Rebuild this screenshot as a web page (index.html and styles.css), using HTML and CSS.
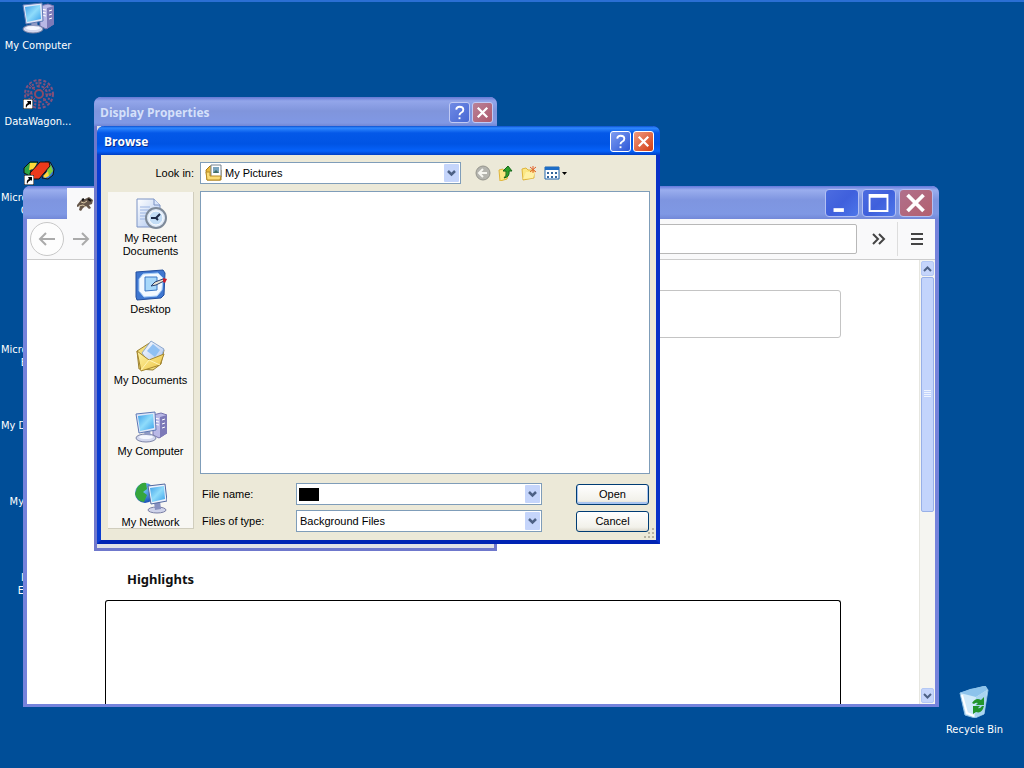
FILE: index.html
```html
<!DOCTYPE html>
<html lang="en">
<head>
    <meta charset="UTF-8">
    <meta name="viewport" content="width=device-width, initial-scale=1.0">
    <title>Desktop</title>
    <link rel="stylesheet" href="styles.css">
</head>
<body>

<!-- Shared icons -->
<svg class="defs" width="0" height="0" aria-hidden="true">
    <defs>
        <linearGradient id="screenBlue" x1="0" y1="0" x2="1" y2="1">
            <stop offset="0" stop-color="#3f9fe8"/>
            <stop offset="0.5" stop-color="#8fdcfb"/>
            <stop offset="1" stop-color="#3aa0ea"/>
        </linearGradient>
        <linearGradient id="paper" x1="0" y1="0" x2="1" y2="1">
            <stop offset="0" stop-color="#ffffff"/>
            <stop offset="1" stop-color="#a9c3ee"/>
        </linearGradient>
        <linearGradient id="folderYellow" x1="0" y1="0" x2="1" y2="1">
            <stop offset="0" stop-color="#fff5a8"/>
            <stop offset="1" stop-color="#edc443"/>
        </linearGradient>
        <radialGradient id="globe" cx="0.4" cy="0.3" r="0.8">
            <stop offset="0" stop-color="#7fd4ff"/>
            <stop offset="1" stop-color="#0b3fae"/>
        </radialGradient>
    </defs>
    <symbol id="computer" viewBox="0 0 32 32">
        <path d="M18 4l8-2 6 2v18l-8 5-6-3z" fill="#b9b8e6" stroke="#7673ad"/>
        <path d="M25 6l7-2v18l-7 5z" fill="#7d7ab8"/>
        <path d="M19 7l5 1M19 10l5 1M19 13l5 1M27 9l3-1M27 13l3-1M27 17l3-1" stroke="#fff"/>
        <ellipse cx="11" cy="27" rx="10" ry="4" fill="#d3d8ee" stroke="#7d85a8"/>
        <path d="M9 20l6-1 1 7-6 1z" fill="#8f9ac4"/>
        <ellipse cx="11" cy="26" rx="7" ry="2" fill="#f5f7ff"/>
        <path d="M1 3l19-2 1 18-17 3z" fill="#dfe7f8" stroke="#5e79b5"/>
        <path d="M3 5l15-2 1 14-14 3z" fill="url(#screenBlue)"/>
    </symbol>
    <symbol id="recent" viewBox="0 0 32 32">
        <path d="M2 1h17l6 6v22H2z" fill="url(#paper)" stroke="#7c93c4"/>
        <path d="M19 1v6h6" fill="#dbe7fb" stroke="#7c93c4"/>
        <path d="M5 9h10M5 12h9M5 15h8M5 18h7M5 21h7" stroke="#9bb4e2"/>
        <circle cx="21" cy="20" r="10" fill="#dce8f7" stroke="#7e8a99" stroke-width="2"/>
        <circle cx="21" cy="20" r="7" fill="#c3ddf6" stroke="#fff"/>
        <path d="M25 16l-4 4h-5M21 20l2 2" fill="none" stroke="#1d2c4a" stroke-width="2"/>
    </symbol>
    <symbol id="desk" viewBox="0 0 32 32">
        <path d="M1 3l27-2 2 3-1 22-3 3-24 2-1-3z" fill="#3f77d0" stroke="#234f9f"/>
        <path d="M8 5l15-1 5 5-1 12-5 6-13 1-5-6 0-12z" fill="#f3f9ff" stroke="#a6cdf7"/>
        <path d="M10 8h12v13l-12 1z" fill="#a8d8fa" stroke="#3b77c4"/>
        <path d="M16 17l4-4 8-3 1 2-8 4z" fill="#e8e2d2" stroke="#27406f"/>
        <path d="M28 9l4 1-2 4-2-1z" fill="#c81e2b"/>
    </symbol>
    <symbol id="documents" viewBox="0 0 32 32">
        <path d="M2 11l14-9 13 8-3 14-8 6-14-1z" fill="#f2dd7a" stroke="#9b8132"/>
        <path d="M7 13l9-12 13 8-3 9-12 5z" fill="url(#paper)" stroke="#8fa9cf"/>
        <path d="M12 11l6-7 7 6-5 7z" fill="#8fc0f3"/>
        <path d="M2 11l12 9 15-6-4 11-19 6z" fill="url(#folderYellow)" stroke="#a5862e"/>
        <path d="M6 30l8-10 11 5" fill="none" stroke="#fff4b5"/>
    </symbol>
    <symbol id="network" viewBox="0 0 32 32">
        <circle cx="10" cy="11" r="10" fill="url(#globe)"/>
        <path d="M2 6q4-6 9-5l1 6-4 3 4 3-3 7q-7-1-9-8z" fill="#36a63c"/>
        <ellipse cx="22" cy="28" rx="9" ry="3" fill="#cfd3ea" stroke="#7a7fa5"/>
        <path d="M19 20l6-1 1 8-6 1z" fill="#8790c0"/>
        <path d="M13 4l17-2 2 17-16 3z" fill="#edf2fd" stroke="#53699f"/>
        <path d="M15 6l14-2 1 13-13 3z" fill="url(#screenBlue)"/>
    </symbol>
    <symbol id="bin" viewBox="0 0 32 32">
        <path d="M2 7l10-3 15-4 3 4-4 24-9 4-10-3z" fill="#cfeafa" stroke="#8fbfe2"/>
        <path d="M2 7l10-4 16-3 1 4-11 7z" fill="#8cc3ec"/>
        <path d="M18 11l11-7-3 24-9 3z" fill="#a9d4f0"/>
        <path d="M4 9l5 18 7 3" fill="none" stroke="#fff" stroke-width="2"/>
        <path d="M14 17q4-6 9-3l3-3v8h-8l2-2q-2-1-4 1zM26 20q-2 8-8 6l-3 2v-8h7l-2 2q2 1 4-2z" fill="#23952c"/>
    </symbol>
    <symbol id="shortcut" viewBox="0 0 10 10">
        <path d="M0 0h10v10H0z" fill="#fff" stroke="#000"/>
        <path d="M3 9q-1-4 2-5L4 2h4v4L7 5Q4 6 3 9z" fill="#000"/>
    </symbol>
    <symbol id="chevron" viewBox="0 0 15 18">
        <rect width="15" height="18" rx="1" fill="#c5d5fb"/>
        <path d="M4 7l3.500 3.500L11 7" fill="none" stroke="#4d6185" stroke-width="2.500"/>
    </symbol>
    <symbol id="question" viewBox="0 0 20 20">
        <path d="M6.500 7Q7 4 10 4q4 0 4 3 0 2-2 3-2 1-2 3" fill="none" stroke="#fff" stroke-width="2"/>
        <path d="M9 15h2v2H9z" fill="#fff"/>
    </symbol>
    <symbol id="cross" viewBox="0 0 20 20">
        <path d="M5 5l10 10M15 5L5 15" stroke="#fff" stroke-width="2.400"/>
    </symbol>
</svg>

<main class="desktop">

    <!-- Desktop icons -->
    <ul class="shortcuts">
        <li class="shortcut">
            <svg class="icon"><use href="#computer"/></svg>
            <span>My Computer</span>
        </li>
        <li class="shortcut">
            <svg class="icon" viewBox="0 0 32 32">
                <g fill="none" stroke="#80527f">
                    <circle cx="17" cy="16" r="14" stroke-width="2" stroke-dasharray="3 2"/>
                    <circle cx="17" cy="16" r="11" stroke-width="2" stroke-dasharray="2 2"/>
                    <circle cx="17" cy="16" r="8" stroke-width="2" stroke-dasharray="3 2"/>
                    <circle cx="17" cy="16" r="4" stroke-width="2" stroke="#8c4a66"/>
                    <path d="M17 2v8M17 22v8M3 16h8M23 16h8M7 6l6 6M21 20l6 6M27 6l-6 6M13 20l-6 6" stroke="#8c4a66"/>
                </g>
                <use href="#shortcut" x="1" y="21" width="10" height="10"/>
            </svg>
            <span>DataWagon...</span>
        </li>
        <li class="shortcut cut">
            <svg class="icon" viewBox="0 0 32 32">
                <path d="M1 14l6-6h8l-7 8-1 6-6-3z" fill="#2da345" stroke="#111"/>
                <path d="M7 9l7 0-3 6-5 1z" fill="#ffd83a"/>
                <path d="M22 8h5l4 7-1 6-5 4-6-1 5-8z" fill="#3679d8" stroke="#111"/>
                <path d="M24 10l4 1 2 6-4 5-2-6z" fill="#7fcf3d"/>
                <path d="M20 22l5-5 1 5-4 2z" fill="#ffd83a"/>
                <path d="M7 19L17 8h9l1 4-11 13H8z" fill="#ec3a1c" stroke="#111"/>
                <use href="#shortcut" x="1" y="21" width="10" height="10"/>
            </svg>
            <span>Micro<br>C</span>
        </li>
        <li class="shortcut"></li>
        <li class="shortcut cut"><i class="icon"></i><span>Micro<br>B</span></li>
        <li class="shortcut cut"><i class="icon"></i><span>My D</span></li>
        <li class="shortcut cut"><i class="icon"></i><span>My</span></li>
        <li class="shortcut cut"><i class="icon"></i><span>I<br>E</span></li>
    </ul>

    <div class="shortcut recycle">
        <svg class="icon"><use href="#bin"/></svg>
        <span>Recycle Bin</span>
    </div>

    <!-- Browser window -->
    <section class="window browser" aria-label="Browser">
        <header class="browser-title">
            <div class="tab">
                <svg width="18" height="16" viewBox="0 0 18 16">
                    <path d="M1 9l4-5 4-1 4-2 4 3-1 4-3 1 2 3-2 1-3-3-3 2-2 3-2-1 1-4-3 1z" fill="#65564a"/>
                    <path d="M5 6l3 1 3-2M3 10l4-1 3 2" fill="none" stroke="#d9c7a4"/>
                    <path d="M12 3l3 2M6 4l2-1" stroke="#111" stroke-width="2"/>
                </svg>
            </div>
            <button class="win-btn" aria-label="Minimize"><svg viewBox="0 0 34 27"><path d="M8 19h11v4H8z" fill="#fff"/></svg></button>
            <button class="win-btn" aria-label="Maximize"><svg viewBox="0 0 34 27"><path d="M7 5h19v17H7zM7 7h19" fill="none" stroke="#fff" stroke-width="2"/></svg></button>
            <button class="win-btn close" aria-label="Close window"><svg viewBox="0 0 34 27"><path d="M8 5l17 17M25 5L8 22" stroke="#fff" stroke-width="4"/></svg></button>
        </header>
        <nav class="toolbar">
            <button class="nav-btn back" aria-label="Back"><svg width="18" height="16" viewBox="0 0 18 16"><path d="M17 8H2M8 2L2 8l6 6" fill="none" stroke="#aaa" stroke-width="2"/></svg></button>
            <button class="nav-btn" aria-label="Forward"><svg width="18" height="16" viewBox="0 0 18 16"><path d="M1 8h15M10 2l6 6-6 6" fill="none" stroke="#aaa" stroke-width="2"/></svg></button>
            <input class="address" type="text" aria-label="Address">
            <button class="nav-btn more" aria-label="More tools"><svg width="14" height="12" viewBox="0 0 14 12"><path d="M1 1l5 5-5 5M7 1l5 5-5 5" fill="none" stroke="#444" stroke-width="2"/></svg></button>
            <button class="nav-btn menu" aria-label="Menu"><svg width="12" height="12" viewBox="0 0 12 12"><path d="M0 1h12M0 6h12M0 11h12" stroke="#444" stroke-width="2"/></svg></button>
        </nav>
        <div class="viewport">
            <div class="page">
                <div class="notice"></div>
                <h2>Highlights</h2>
                <div class="highlights"></div>
            </div>
            <div class="scrollbar">
                <button aria-label="Scroll up"><svg width="9" height="6" viewBox="0 0 9 6"><path d="M1 5l3.500-3.500L8 5" fill="none" stroke="#4d6185" stroke-width="2"/></svg></button>
                <div class="thumb"><svg width="7" height="8" viewBox="0 0 7 8"><path d="M0 .5h7M0 2.500h7M0 4.500h7M0 6.500h7" stroke="#eef4ff"/></svg></div>
                <div class="track"></div>
                <button aria-label="Scroll down"><svg width="9" height="6" viewBox="0 0 9 6"><path d="M1 1l3.500 3.500L8 1" fill="none" stroke="#4d6185" stroke-width="2"/></svg></button>
            </div>
        </div>
    </section>

    <!-- Display Properties, inactive -->
    <section class="window properties" aria-label="Display Properties">
        <header class="title">
            <h1>Display Properties</h1>
            <button class="title-btn" aria-label="Help"><svg><use href="#question"/></svg></button>
            <button class="title-btn close" aria-label="Close"><svg><use href="#cross"/></svg></button>
        </header>
        <div class="properties-body"></div>
    </section>

    <!-- Browse dialog -->
    <section class="window browse" role="dialog" aria-labelledby="browseTitle">
        <header class="title">
            <h1 id="browseTitle">Browse</h1>
            <button class="title-btn" aria-label="Help"><svg><use href="#question"/></svg></button>
            <button class="title-btn close" aria-label="Close"><svg><use href="#cross"/></svg></button>
        </header>
        <form class="dialog">
            <label class="look-label" for="lookIn">Look in:</label>
            <div class="look-row">
                <div class="combo look">
                    <svg width="18" height="18" viewBox="0 0 18 18">
                        <path d="M1 6l4-4h3v4h8v10H2z" fill="#e9b93d" stroke="#a87a17"/>
                        <path d="M6 1h10v12H6z" fill="#fff" stroke="#77838f"/>
                        <path d="M8 3h6v6H8z" fill="#7ba4bd"/>
                        <path d="M8 9l3-3 3 3z" fill="#3f6d66"/>
                        <path d="M1 8h4v4h11l-1 4H2z" fill="#fbdc75" stroke="#b58a26"/>
                    </svg>
                    <select id="lookIn"><option>My Pictures</option></select>
                    <svg class="arrow"><use href="#chevron"/></svg>
                </div>
                <button type="button" class="tool" aria-label="Go back"><svg width="16" height="16" viewBox="0 0 16 16"><circle cx="8" cy="8" r="7" fill="#b4b4ae" stroke="#96968e"/><path d="M12 8H5M8 4L4 8l4 4" fill="none" stroke="#f5f5f0" stroke-width="2"/></svg></button>
                <button type="button" class="tool" aria-label="Up one level"><svg width="16" height="16" viewBox="0 0 16 16"><path d="M1 5l4-1 1 2h5l-2 8-7 2z" fill="#fbe784" stroke="#dfb43b"/><path d="M6 13q3-2 2-7H5l5-5 4 5h-3q1 6-5 7z" fill="#2e9f2b" stroke="#15691a"/></svg></button>
                <button type="button" class="tool" aria-label="New folder"><svg width="16" height="16" viewBox="0 0 16 16"><path d="M1 4l4-1 2 2h6v8L2 15z" fill="#fbe784" stroke="#dfb43b"/><path d="M2 14l3-7h9l-2 6z" fill="#fff1a3"/><path d="M12 1v7M9 2l6 5M15 2l-6 5" stroke="#e2622b"/></svg></button>
                <button type="button" class="tool" aria-label="View menu"><svg width="24" height="16" viewBox="0 0 24 16"><path d="M1 2h14v12H1z" fill="#fff" stroke="#1f64ae"/><path d="M1 2h14v3H1z" fill="#1d6dc6"/><path d="M3 7h2v2H3zM7 7h2v2H7zM11 7h2v2h-2zM3 11h2v2H3zM7 11h2v2H7zM11 11h2v2h-2z" fill="#33669c"/><path d="M18 7h5l-2.500 3z" fill="#000"/></svg></button>
            </div>

            <div class="places">
                <button type="button"><svg class="icon"><use href="#recent"/></svg>My Recent Documents</button>
                <button type="button"><svg class="icon"><use href="#desk"/></svg>Desktop</button>
                <button type="button"><svg class="icon"><use href="#documents"/></svg>My Documents</button>
                <button type="button"><svg class="icon"><use href="#computer"/></svg>My Computer</button>
                <button type="button"><svg class="icon"><use href="#network"/></svg>My Network</button>
            </div>

            <div class="files">
                <div class="file-list"></div>
                <div class="fields">
                    <label for="fileName">File name:</label>
                    <div class="combo">
                        <span class="mask"></span>
                        <input id="fileName" type="text">
                        <svg class="arrow"><use href="#chevron"/></svg>
                    </div>
                    <button type="submit" class="push default">Open</button>
                    <label for="fileType">Files of type:</label>
                    <div class="combo">
                        <select id="fileType"><option>Background Files</option></select>
                        <svg class="arrow"><use href="#chevron"/></svg>
                    </div>
                    <button type="button" class="push">Cancel</button>
                </div>
            </div>
        </form>
        <svg class="grip" width="12" height="12" viewBox="0 0 12 12"><path d="M8 0h2v2H8zM4 4h2v2H4zM8 4h2v2H8zM0 8h2v2H0zM4 8h2v2H4zM8 8h2v2H8z" fill="#b8b4a2"/></svg>
    </section>

</main>

</body>
</html>
```
FILE: styles.css
```css
* {
    box-sizing: border-box;
}
body {
    margin: 0;
    font-family: "Liberation Sans", Arial, sans-serif;
    font-size: 11px;
    line-height: 13px;
    color: #000;
}
button, input, select {
    font: inherit;
    color: inherit;
    padding: 0;
    margin: 0;
    border: 0;
    background: none;
    border-radius: 0;
}
svg {
    display: block;
    flex: none;
}
.defs {
    position: absolute;
}
.icon {
    display: block;
    width: 32px;
    height: 32px;
}
.desktop {
    position: relative;
    min-height: 100vh;
    overflow: hidden;
    background: #004e98;
    border-top: 2px solid #2a6fd4;
}

/* Desktop icons */
.shortcuts {
    list-style: none;
    margin: 0;
    padding: 0;
    width: 76px;
}
.shortcut {
    display: flex;
    flex-direction: column;
    align-items: center;
    gap: 5px;
    height: 76px;
    font-family: "DejaVu Sans Condensed", "DejaVu Sans", sans-serif;
    color: #fff;
    white-space: nowrap;
}
.cut .icon {
    margin-left: 1px;
}
.cut span {
    align-self: flex-start;
    min-width: 24px;
    padding-left: 1px;
    text-align: right;
}
.recycle {
    position: absolute;
    right: 21px;
    bottom: 6px;
}

/* Windows */
.window {
    position: absolute;
    display: flex;
    flex-direction: column;
}
.title {
    display: flex;
    align-items: center;
    gap: 2px;
    height: 29px;
    padding: 2px 2px 0 3px;
}
.title h1 {
    flex: 1;
    margin: 0;
    font: bold 12px/18px "Open Sans", sans-serif;
}
.title-btn {
    width: 21px;
    height: 21px;
    border: 1px solid #fff;
    border-radius: 3px;
    background: linear-gradient(135deg, #7e9df0, #2c57d8);
}
.title-btn svg {
    width: 19px;
    height: 19px;
}
.title-btn.close {
    background: linear-gradient(135deg, #f09a80, #d33c12);
}

/* Browser */
.browser {
    top: 184px;
    left: 23px;
    right: 85px;
    bottom: 61px;
    border: 4px solid #7583dc;
    border-top: 0;
    border-bottom-width: 3px;
    border-radius: 7px 7px 0 0;
    background: #fff;
}
.browser-title {
    display: flex;
    align-items: center;
    gap: 3px;
    height: 33px;
    margin: 0 -4px;
    padding: 0 6px 0 44px;
    border-radius: 7px 7px 0 0;
    background: linear-gradient(#6378dc, #9aaeee 4px, #7e95e0 14px, #7f98e4 28px, #7288d8);
}
.tab {
    display: flex;
    align-items: center;
    width: 60px;
    height: 31px;
    margin: 2px auto 0 0;
    padding-left: 9px;
    background: #f9f9fa;
}
.win-btn {
    width: 34px;
    height: 28px;
    border: 1px solid #b3c0f4;
    border-radius: 4px;
    background: linear-gradient(135deg, #4c6ce0, #3f60dc 50%, #4d76ea);
}
.win-btn svg {
    width: 100%;
    height: 100%;
}
.win-btn.close {
    background: linear-gradient(135deg, #b0708c, #b3606f);
}
.toolbar {
    display: flex;
    align-items: center;
    height: 41px;
    padding-left: 3px;
    background: #f9f9fa;
    border-bottom: 1px solid #ccc;
}
.nav-btn {
    display: flex;
    align-items: center;
    justify-content: center;
    width: 34px;
    height: 34px;
}
.back {
    border: 1px solid #c8c8c8;
    border-radius: 50%;
    background: #fdfdfd;
}
.address {
    flex: 1;
    min-width: 0;
    height: 30px;
    margin: 0 4px 0 6px;
    border: 1px solid #b8b8b8;
    border-radius: 2px;
    background: #fff;
}
.more {
    width: 36px;
}
.menu {
    width: 38px;
    border-left: 1px solid #ddd;
}
.viewport {
    display: flex;
    flex: 1;
    min-height: 0;
}
.page {
    display: flex;
    flex-direction: column;
    flex: 1;
    padding: 30px 78px 0;
}
.notice {
    height: 48px;
    border: 1px solid #c4c4c4;
    border-radius: 3px;
}
.page h2 {
    margin: 231px 0 11px;
    padding-left: 22px;
    font: bold 13px/20px "Noto Sans", sans-serif;
    color: #111;
}
.highlights {
    flex: 1;
    border: 1px solid #000;
    border-bottom: 0;
    border-radius: 3px 3px 0 0;
}
.scrollbar {
    display: flex;
    flex-direction: column;
    width: 16px;
    padding: 1px;
    background: #f5f5f1;
    border-left: 1px solid #e6e6e0;
}
.scrollbar button {
    display: flex;
    align-items: center;
    justify-content: center;
    height: 15px;
    border: 1px solid #b4c8f4;
    border-radius: 2px;
    background: #c5d5fb;
}
.thumb {
    display: flex;
    align-items: center;
    justify-content: center;
    flex: 234;
    margin-top: 1px;
    border: 1px solid #98b0e8;
    border-radius: 2px;
    background: #c3d4fc;
}
.track {
    flex: 177;
}

/* Display Properties */
.properties {
    top: 95px;
    left: 94px;
    width: 403px;
    height: 454px;
    border: 3px solid #6f78cc;
    border-top: 0;
    border-radius: 7px 7px 0 0;
    background: #e0e1e6;
}
.properties .title {
    margin: 0 -3px;
    padding-left: 6px;
    padding-right: 4px;
    border-radius: 7px 7px 0 0;
    background: linear-gradient(#6478d4, #93a6ea 4px, #8095dc 14px, #8098e4 26px, #7085d4);
    color: #d5e0fa;
}
.properties .title-btn {
    border-color: #c0caf4;
    background: linear-gradient(135deg, #6f8ae4, #4768d4);
}
.properties .title-btn.close {
    background: linear-gradient(135deg, #b98298, #ae596c);
}

/* Browse dialog */
.browse {
    top: 124px;
    left: 97px;
    width: 563px;
    border: 4px solid #0831d9;
    border-color: #0a49e0 #0831c8 #0024b4 #0a3cd0;
    border-top: 0;
    border-radius: 7px 7px 0 0;
    background: #ece9d8;
}
.browse .title {
    margin: 0 -4px;
    padding-left: 7px;
    padding-right: 6px;
    border-radius: 7px 7px 0 0;
    background: linear-gradient(#0a50d0, #2f88ff 2px, #0458e8 7px, #0054e4 18px, #0662fa 25px, #003fc4);
    color: #fff;
}
.browse .title h1 {
    text-shadow: 1px 1px #0a2f8c;
}
.dialog {
    display: grid;
    grid-template-columns: 86px 1fr;
    gap: 7px 6px;
    padding: 7px 6px 8px 7px;
}
.look-label {
    align-self: center;
    text-align: right;
}
.look-row {
    display: flex;
    align-items: center;
}
.combo {
    display: flex;
    align-items: center;
    height: 22px;
    padding: 1px;
    border: 1px solid #7f9db9;
    background: #fff;
}
.combo select, .combo input {
    flex: 1;
    min-width: 0;
    height: 18px;
    padding-left: 2px;
    appearance: none;
    outline: none;
}
.look {
    width: 261px;
    margin-right: 14px;
    padding-left: 4px;
}
.arrow {
    width: 15px;
    height: 18px;
}
.tool {
    margin-right: 7px;
}
.places {
    display: flex;
    flex-direction: column;
    margin: 1px 0 3px;
    padding-top: 6px;
    border-right: 1px solid #d0cdbd;
    border-bottom: 1px solid #d0cdbd;
    background: #f8f7f3;
}
.places button {
    display: flex;
    flex-direction: column;
    align-items: center;
    gap: 2px;
    height: 71px;
    padding: 0 12px;
}
.places button:not(:first-child) {
    white-space: nowrap;
}
.places button:last-child {
    height: 46px;
}
.files {
    display: flex;
    flex-direction: column;
    gap: 9px;
}
.file-list {
    height: 283px;
    border: 1px solid #7f9db9;
    background: #fff;
}
.fields {
    display: grid;
    grid-template-columns: 88px 246px 1fr;
    gap: 5px 6px;
    align-items: center;
    padding: 0 1px 0 2px;
}
.mask {
    width: 20px;
    height: 13px;
    margin-left: 1px;
    background: #000;
}
.push {
    width: 73px;
    height: 21px;
    justify-self: end;
    border: 1px solid #003c74;
    border-radius: 3px;
    background: linear-gradient(#fff, #f2f1ea 80%, #dcd8cc);
}
.default {
    box-shadow: inset 0 -1px 0 1px #a8c4f0;
}
.grip {
    position: absolute;
    right: 0;
    bottom: 0;
}
```
